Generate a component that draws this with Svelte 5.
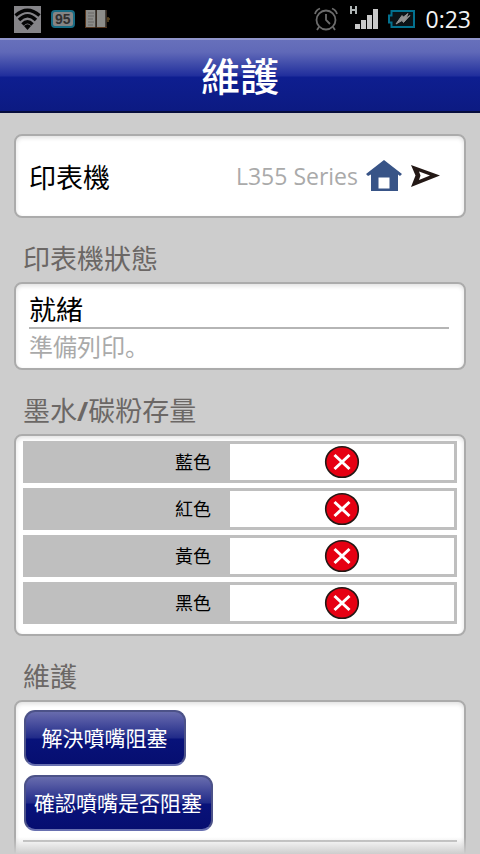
<script>
  const inks = ['藍色', '紅色', '黃色', '黑色'];
  const actions = ['解決噴嘴阻塞', '確認噴嘴是否阻塞'];
  const printer = 'L355 Series';
</script>

<div class="screen">
  <div class="status">
    <div class="status__group">
      <svg class="status__icon" width="27" height="27" viewBox="0 0 27 27" aria-hidden="true">
        <rect width="27" height="27" fill="#858488" />
        <g fill="none" stroke="#050505" stroke-width="3.400">
          <path d="M1.500 9.500Q13.500 -1 25.500 9.500" />
          <path d="M5 14Q13.500 5.500 22 14" />
          <path d="M8.500 18.500Q13.500 13 18.500 18.500" />
        </g>
        <path d="M10 20Q13.500 16.500 17 20L13.500 24z" fill="#050505" />
      </svg>
      <div class="status__charge">95</div>
      <svg class="status__icon" width="26" height="20" viewBox="0 0 26 20" aria-hidden="true">
        <path d="M0 1h22v18H0z" fill="#55351d" />
        <path d="M1 1h10v17H1zM12 1h9v17h-9z" fill="#8c8c89" />
        <path d="M3 4h6M3 7h6M3 10h5M3 13h6M3 16h5" stroke="#686765" />
        <path d="M11 1v18M21 1v17" stroke="#2d2825" stroke-width="1.500" />
        <path d="M22 10h3M23 8v5" stroke="#5c4520" stroke-width="1.500" />
      </svg>
    </div>
    <div class="status__group">
      <svg width="24" height="24" viewBox="0 0 24 24" fill="none" stroke="#6b6b6b" stroke-width="1.800" aria-hidden="true">
        <circle cx="12" cy="13" r="9.500" />
        <path d="M12 7v6l4 4M1 7Q2 3 6 1.500M18 1.500Q22 3 23 7M5 20l-2 3M19 20l2 3" />
      </svg>
      <svg width="30" height="26" viewBox="0 0 30 26" aria-hidden="true">
        <path d="M3 0v8M8 0v8M3 4h5" fill="none" stroke="#aeb4b4" stroke-width="2" />
        <path d="M7 18h5v5H7zM13 14h5v9h-5zM19 9h5v14h-5zM25 3h5v20h-5z" fill="#c9c9c9" />
      </svg>
      <svg width="28" height="20" viewBox="0 0 28 20" aria-hidden="true">
        <path d="M3.500 2H26v16H3.500v-4.500H1v-7h2.500z" fill="#0b1317" stroke="#03718f" stroke-width="2" />
        <path d="M20 4.500L15.500 8 14 6.500 8 15l6-3.500 1.500 2L22 6.500 18 9z" fill="#929292" stroke="#929292" />
      </svg>
      <time class="status__time">0:23</time>
    </div>
  </div>

  <header class="header">
    <h1 class="header__title">維護</h1>
  </header>

  <main class="content">
    <button class="card printer" type="button">
      <span class="printer__label">印表機</span>
      <span class="printer__name">{printer}</span>
      <svg width="36" height="32" viewBox="0 0 36 32" aria-hidden="true">
        <path d="M18 0L36 14l-2 2-2-1.500V31H5V14.500L2 16l-2-2z" fill="#385487" />
        <path d="M12.500 17.500h11v11h-11z" fill="#fff" />
      </svg>
      <svg class="printer__arrow" width="30" height="24" viewBox="0 0 30 24" aria-hidden="true">
        <path d="M0 1L29 11.500 0 23 4.500 11.500zM8 7.500L9.500 11.500 8 16 19 11.500z" fill="#231815" fill-rule="evenodd" />
      </svg>
    </button>

    <h2 class="heading">印表機狀態</h2>
    <section class="card state">
      <p class="state__title">就緒</p>
      <p class="state__text">準備列印。</p>
    </section>

    <h2 class="heading">墨水<b>/</b>碳粉存量</h2>
    <section class="card">
      <table class="inks">
        <tbody>
          {#each inks as ink}
            <tr>
              <th class="inks__name" scope="row">{ink}</th>
              <td class="inks__level">
                <svg class="inks__icon" width="36" height="34" viewBox="0 0 36 34" role="img" aria-label="X">
                  <ellipse cx="18" cy="17" rx="16.300" ry="15.300" fill="#e60012" stroke="#231815" stroke-width="1.600" />
                  <path d="M10.500 10l15 14M25.500 10l-15 14" stroke="#fff" stroke-width="3" />
                </svg>
              </td>
            </tr>
          {/each}
        </tbody>
      </table>
    </section>

    <h2 class="heading">維護</h2>
    <section class="card actions">
      {#each actions as action}
        <button class="actions__button" type="button">{action}</button>
      {/each}
      <hr class="actions__line" />
    </section>
  </main>
  <div class="fade"></div>
</div>

<style>
  :global(body) {
    background: #cdcdcd;
  }

  .screen {
    position: relative;
    display: flex;
    flex-direction: column;
    height: 100vh;
    overflow: hidden;
    background: #cdcdcd;
    color: #000;
    font-family: 'Open Sans', 'Noto Sans CJK TC', sans-serif;
  }

  .status {
    display: flex;
    flex: none;
    align-items: center;
    justify-content: space-between;
    height: 38px;
    padding: 0 9px 0 14px;
    background: #000;
  }

  .status__group {
    display: flex;
    align-items: center;
    gap: 10px;
  }

  .status__charge {
    padding: 0 2px;
    border: 2px solid #176b83;
    border-radius: 4px;
    background: #858585;
    color: #303030;
    font: bold 14px/14px 'Liberation Sans', sans-serif;
  }

  .status__time {
    color: #f2f2f2;
    font-size: 23px;
    line-height: 38px;
  }

  .header {
    flex: none;
    box-sizing: border-box;
    height: 75px;
    border-top: 2px solid #9095cb;
    border-bottom: 2px solid #060d3c;
    background: linear-gradient(#6770bb 0, #6069b8 12px, #202e9c 36px, #0e1e90 37px, #0c1a82 100%);
  }

  .header__title {
    margin: 0;
    color: #fff;
    font-size: 39px;
    font-weight: 500;
    line-height: 71px;
    text-align: center;
  }

  .content {
    flex: 1;
    min-height: 0;
    padding: 21px 14px 0;
    overflow-y: auto;
    scrollbar-width: none;
  }

  .card {
    box-sizing: border-box;
    width: 100%;
    border: 2px solid #ababab;
    border-radius: 8px;
    background: #fff;
    box-shadow: inset 0 2px 4px #e0e0e0;
  }

  .heading {
    margin: 0;
    padding: 18px 10px 0 9px;
    color: #6b6765;
    font-size: 27px;
    font-weight: 400;
    line-height: 46px;
  }

  .printer {
    display: flex;
    align-items: center;
    height: 84px;
    padding: 0 23px 0 13px;
    color: #000;
    font-family: inherit;
    text-align: left;
  }

  .printer__label {
    flex: 1;
    font-size: 27px;
  }

  .printer__name {
    margin-right: 8px;
    color: #aaa;
    font-size: 23px;
  }

  .printer__arrow {
    margin-left: 9px;
  }

  .state {
    height: 88px;
    padding: 9px 15px 0 13px;
  }

  .state__title {
    margin: 0;
    border-bottom: 2px solid #b5b5b5;
    font-size: 27px;
    line-height: 34px;
  }

  .state__text {
    margin: 0;
    color: #aaa;
    font-family: 'Noto Sans CJK JP', sans-serif;
    font-size: 24px;
    line-height: 34px;
  }

  .inks {
    width: 100%;
    padding: 0 7px 5px;
    border-collapse: separate;
    border-spacing: 0 5px;
    table-layout: fixed;
  }

  .inks__name,
  .inks__level {
    box-sizing: border-box;
    height: 42px;
    background: #bfbfbf;
    font-size: 18px;
    font-weight: 400;
    line-height: 24px;
  }

  .inks__name {
    width: 47%;
    padding: 0 16px 0 0;
    text-align: right;
  }

  .inks__level {
    padding: 0;
    border: 3px solid #bfbfbf;
    background: #fff;
    text-align: center;
  }

  .inks__icon {
    display: block;
    margin: 0 auto;
  }

  .actions {
    display: flex;
    flex-direction: column;
    align-items: flex-start;
    gap: 9px;
    padding: 8px 7px 24px;
  }

  .actions__button {
    height: 56px;
    margin-left: 1px;
    padding: 0 9px 0 8px;
    min-width: 162px;
    border: 2px solid #4c5288;
    border-bottom-color: #6870b0;
    border-radius: 11px;
    background: linear-gradient(#686cad 0, #5358a3 8px, #202a88 26px, #08127a 27px, #060e70 100%);
    color: #fff;
    font-family: inherit;
    font-size: 21px;
    line-height: 28px;
  }

  .actions__line {
    width: 100%;
    margin: 0;
    border: 0;
    border-top: 2px solid #bfbfbf;
  }

  /* content runs out under the bottom edge of the screen */
  .fade {
    position: absolute;
    right: 0;
    bottom: 0;
    left: 0;
    height: 17px;
    background: linear-gradient(rgba(205, 205, 205, 0), #cdcdcd);
    pointer-events: none;
  }
</style>
